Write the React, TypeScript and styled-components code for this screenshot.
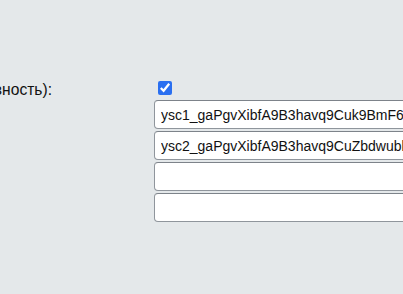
import React from "react"
import styled, { createGlobalStyle } from "styled-components"

const GlobalStyle = createGlobalStyle`
  html, body {
    margin: 0;
    padding: 0;
    background: #e4e8ea;
  }
  body {
    font-family: "Liberation Sans", Arial, sans-serif;
    overflow: hidden;
  }
`

const Page = styled.div`
  width: 403px;
  height: 294px;
  padding-top: 81px;
  box-sizing: border-box;
  background: #e4e8ea;
`

const Row = styled.div`
  display: grid;
  grid-template-columns: 154px 1fr;
  align-items: start;
`

const Label = styled.div`
  display: flex;
  justify-content: flex-end;
  width: 52px;
  overflow: hidden;
  white-space: nowrap;
  font-size: 15.6px;
  line-height: 17px;
  color: #111;
`

const Fields = styled.div`
  display: flex;
  flex-direction: column;
  gap: 2px;
  min-width: 0;
`

const Check = styled.input`
  width: 14px;
  height: 14px;
  margin: 0 0 3px 4px;
  accent-color: #2a6ff0;
`

const Field = styled.input`
  box-sizing: border-box;
  width: 270px;
  height: 29px;
  margin: 0;
  padding: 0 6px;
  border: 1px solid #8f959c;
  border-top-color: #7d838a;
  border-radius: 4px;
  background: #fff;
  font-family: "Liberation Sans", Arial, sans-serif;
  font-size: 14px;
  color: #111;
  outline: none;
`

const keys = [
  "ysc1_gaPgvXibfA9B3havq9Cuk9BmF6dQ2",
  "ysc2_gaPgvXibfA9B3havq9CuZbdwubk7",
  "",
  "",
]

export default function App() {
  return (
    <Page>
      <GlobalStyle />
      <Row>
        <Label>Включено (активность):</Label>
        <Fields>
          <Check type="checkbox" defaultChecked />
          {keys.map((k, i) => (
            <Field key={i} type="text" defaultValue={k} />
          ))}
        </Fields>
      </Row>
    </Page>
  )
}
